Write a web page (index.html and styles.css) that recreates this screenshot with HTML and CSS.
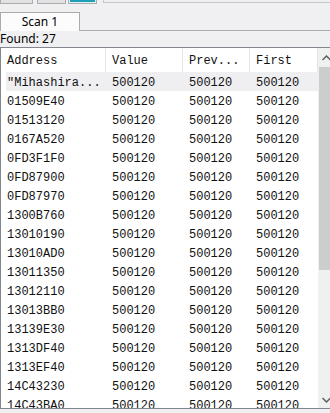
FILE: index.html
```html
<!DOCTYPE html>
<html>
<head>
<meta charset="utf-8">
<link rel="stylesheet" href="styles.css">
</head>
<body>
<div class="toolbar">
  <div class="btn b1"></div>
  <div class="btn b2"></div>
  <div class="btn b3"></div>
  <div class="field"></div>
</div>
<div class="tabs">
  <div class="tab">Scan 1</div>
  <div class="tabfill"></div>
</div>
<div class="found">Found: 27</div>
<div class="list">
  <div class="cols">
    <div class="head">
      <div class="c c1">Address</div>
      <div class="c c2">Value</div>
      <div class="c c3">Prev...</div>
      <div class="c c4">First</div>
    </div>
    <div class="row sel"><div class="c c1">"Mihashira...</div><div class="c c2">500120</div><div class="c c3">500120</div><div class="c c4">500120</div></div>
    <div class="row"><div class="c c1">01509E40</div><div class="c c2">500120</div><div class="c c3">500120</div><div class="c c4">500120</div></div>
    <div class="row"><div class="c c1">01513120</div><div class="c c2">500120</div><div class="c c3">500120</div><div class="c c4">500120</div></div>
    <div class="row"><div class="c c1">0167A520</div><div class="c c2">500120</div><div class="c c3">500120</div><div class="c c4">500120</div></div>
    <div class="row"><div class="c c1">0FD3F1F0</div><div class="c c2">500120</div><div class="c c3">500120</div><div class="c c4">500120</div></div>
    <div class="row"><div class="c c1">0FD87900</div><div class="c c2">500120</div><div class="c c3">500120</div><div class="c c4">500120</div></div>
    <div class="row"><div class="c c1">0FD87970</div><div class="c c2">500120</div><div class="c c3">500120</div><div class="c c4">500120</div></div>
    <div class="row"><div class="c c1">1300B760</div><div class="c c2">500120</div><div class="c c3">500120</div><div class="c c4">500120</div></div>
    <div class="row"><div class="c c1">13010190</div><div class="c c2">500120</div><div class="c c3">500120</div><div class="c c4">500120</div></div>
    <div class="row"><div class="c c1">13010AD0</div><div class="c c2">500120</div><div class="c c3">500120</div><div class="c c4">500120</div></div>
    <div class="row"><div class="c c1">13011350</div><div class="c c2">500120</div><div class="c c3">500120</div><div class="c c4">500120</div></div>
    <div class="row"><div class="c c1">13012110</div><div class="c c2">500120</div><div class="c c3">500120</div><div class="c c4">500120</div></div>
    <div class="row"><div class="c c1">13013BB0</div><div class="c c2">500120</div><div class="c c3">500120</div><div class="c c4">500120</div></div>
    <div class="row"><div class="c c1">13139E30</div><div class="c c2">500120</div><div class="c c3">500120</div><div class="c c4">500120</div></div>
    <div class="row"><div class="c c1">1313DF40</div><div class="c c2">500120</div><div class="c c3">500120</div><div class="c c4">500120</div></div>
    <div class="row"><div class="c c1">1313EF40</div><div class="c c2">500120</div><div class="c c3">500120</div><div class="c c4">500120</div></div>
    <div class="row"><div class="c c1">14C43230</div><div class="c c2">500120</div><div class="c c3">500120</div><div class="c c4">500120</div></div>
    <div class="row"><div class="c c1">14C43BA0</div><div class="c c2">500120</div><div class="c c3">500120</div><div class="c c4">500120</div></div>
  </div>
  <div class="vscroll">
    <div class="arrow up"><svg width="9" height="6" viewBox="0 0 9 6"><path d="M0.5 5 L4.5 1 L8.5 5" fill="none" stroke="#606060" stroke-width="1.5"/></svg></div>
    <div class="thumb"></div>
    <div class="track"></div>
    <div class="arrow down"><svg width="9" height="6" viewBox="0 0 9 6"><path d="M0.5 1 L4.5 5 L8.5 1" fill="none" stroke="#606060" stroke-width="1.5"/></svg></div>
  </div>
</div>
</body>
</html>
```
FILE: styles.css
```css
html, body {
  margin: 0;
  padding: 0;
  overflow: hidden;
  width: 330px;
  height: 413px;
  background: #f0eff2;
}
body {
  font-family: "Noto Sans", "Open Sans", sans-serif;
  font-size: 12px;
  color: #000;
}
.toolbar {
  display: flex;
  align-items: flex-end;
  height: 4px;
  overflow: hidden;
}
.btn {
  box-sizing: border-box;
  height: 22px;
  flex: none;
  border: 1px solid #adadad;
  background: #e1e1e1;
}
.b1 { width: 33px; }
.b2 { width: 29px; margin-left: 4px; }
.b3 { width: 29px; margin-left: 2px; background: #1d9fb6; box-shadow: inset 0 0 0 1px #e5f1fb; border-color: #adadad; }
.field {
  flex: 1;
  height: 22px;
  margin-left: 6px;
  box-sizing: border-box;
  border: 1px solid #c6c6c6;
  border-right: none;
  background: #f0eff2;
  position: relative;
  top: -1px;
}
.tabs {
  display: flex;
  margin-top: 8px;
  height: 19px;
}
.tab {
  box-sizing: border-box;
  width: 80px;
  height: 19px;
  border: 1px solid #acacac;
  border-bottom: none;
  background: #fcfcfd;
  text-align: center;
  line-height: 18px;
}
.tabfill {
  flex: 1;
  border-bottom: 1px solid #acacac;
}
.found {
  height: 16px;
  line-height: 15px;
}
.list {
  box-sizing: border-box;
  width: 336px;
  height: 362px;
  border-top: 1px solid #828790;
  border-left: 1px solid #828790;
  border-bottom: 1px solid #828790;
  background: #fff;
  display: flex;
  overflow: hidden;
}
.cols {
  width: 317px;
  flex: none;
  overflow: hidden;
  font-family: "Liberation Mono", "Courier New", monospace;
  font-size: 12px;
  color: #111;
}
.head {
  display: flex;
  height: 24px;
}
.head .c {
  border-right: 1px solid #e5e5e5;
  line-height: 24px;
  padding-top: 1px;
  height: 24px;
}
.row {
  display: flex;
  height: 19px;
  overflow: hidden;
}
.row .c {
  line-height: 19px;
  padding-top: 2px;
}
.row.sel {
  background: linear-gradient(90deg, #fff 5px, #efeef1 5px);
}
.c {
  box-sizing: border-box;
  padding-left: 6px;
  white-space: nowrap;
  overflow: hidden;
  flex: none;
}
.c1 { width: 105px; }
.c2 { width: 77px; }
.c3 { width: 67px; }
.c4 { width: 68px; }
.vscroll {
  width: 17px;
  flex: none;
  background: #f0f0f0;
  display: flex;
  flex-direction: column;
}
.arrow {
  height: 17px;
  flex: none;
  display: flex;
  align-items: center;
  justify-content: center;
}
.arrow.up { height: 19px; }
.thumb {
  height: 203px;
  margin: 0 1px;
  background: #cdcdcd;
  flex: none;
}
.track { flex: 1; }
```
